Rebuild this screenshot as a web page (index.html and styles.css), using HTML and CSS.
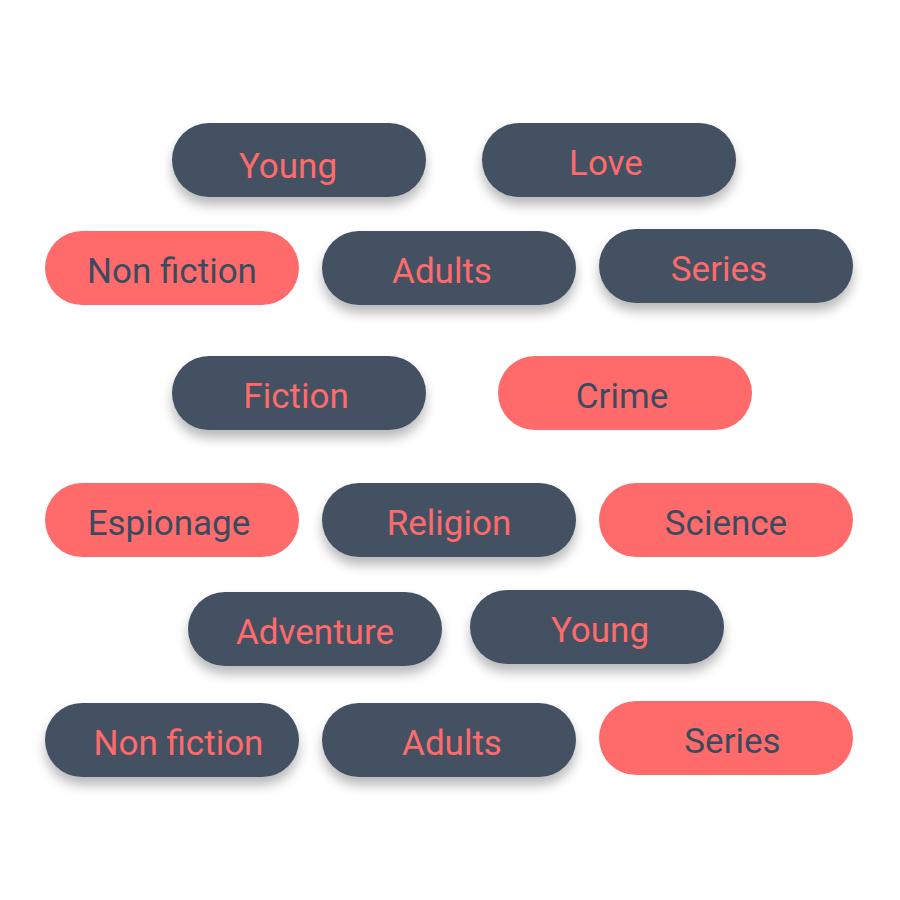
FILE: index.html
```html
<!DOCTYPE html>
<html lang="en">
<head>
  <meta charset="UTF-8">
  <meta name="viewport" content="width=device-width, initial-scale=1.0">
  <title>Book genres</title>
  <link rel="stylesheet" href="styles.css">
</head>
<body>
  <main class="cloud">
    <div class="row row-1">
      <span class="tag tag-dark nudge-left-lg">Young</span>
      <span class="tag tag-dark nudge-left-sm">Love</span>
    </div>

    <div class="row row-2">
      <span class="tag tag-coral">Non fiction</span>
      <span class="tag tag-dark nudge-left">Adults</span>
      <span class="tag tag-dark nudge-left raise">Series</span>
    </div>

    <div class="row row-3">
      <span class="tag tag-dark nudge-left-sm">Fiction</span>
      <span class="tag tag-coral nudge-left-sm">Crime</span>
    </div>

    <div class="row row-4">
      <span class="tag tag-coral nudge-left-sm">Espionage</span>
      <span class="tag tag-dark">Religion</span>
      <span class="tag tag-coral">Science</span>
    </div>

    <div class="row row-5">
      <span class="tag tag-dark">Adventure</span>
      <span class="tag tag-dark nudge-right-sm raise">Young</span>
    </div>

    <div class="row row-6">
      <span class="tag tag-dark nudge-right">Non fiction</span>
      <span class="tag tag-dark nudge-right-sm">Adults</span>
      <span class="tag tag-coral nudge-right raise">Series</span>
    </div>
  </main>
</body>
</html>
```

FILE: styles.css
```css
:root {
  --slate: #435163;
  --coral: #ff6b6b;
  --ink: #3b4b5f;
  --background: #ffffff;
}

* {
  margin: 0;
  padding: 0;
  box-sizing: border-box;
}

body {
  background-color: var(--background);
  font-family: 'Roboto', 'Liberation Sans', Arial, sans-serif;
}

.cloud {
  padding: 123px 0 120px;
}

.row {
  display: flex;
  align-items: flex-start;
  gap: 23px;
  padding-left: 45px;
}

.row-1 {
  padding-left: 172px;
  gap: 56px;
}

.row-2 {
  margin-top: 34px;
}

.row-3 {
  margin-top: 51px;
  padding-left: 172px;
  gap: 72px;
}

.row-4 {
  margin-top: 53px;
}

.row-5 {
  margin-top: 35px;
  padding-left: 188px;
  gap: 28px;
}

.row-6 {
  margin-top: 37px;
}

.tag {
  display: flex;
  align-items: center;
  justify-content: center;
  flex: none;
  width: 254px;
  height: 74px;
  padding-top: 6px;
  border-radius: 37px;
  font-size: 35px;
  font-weight: 400;
}

.tag-dark {
  background-color: var(--slate);
  color: var(--coral);
  box-shadow: 0 8px 12px rgba(0, 0, 0, 0.28);
}

.tag-coral {
  background-color: var(--coral);
  color: var(--ink);
}

.raise {
  margin-top: -2px;
}

.nudge-left-sm {
  padding-right: 6px;
}

.nudge-left {
  padding-right: 14px;
}

.nudge-left-lg {
  padding-right: 22px;
  padding-top: 12px;
}

.nudge-right-sm {
  padding-left: 6px;
}

.nudge-right {
  padding-left: 13px;
}
```
